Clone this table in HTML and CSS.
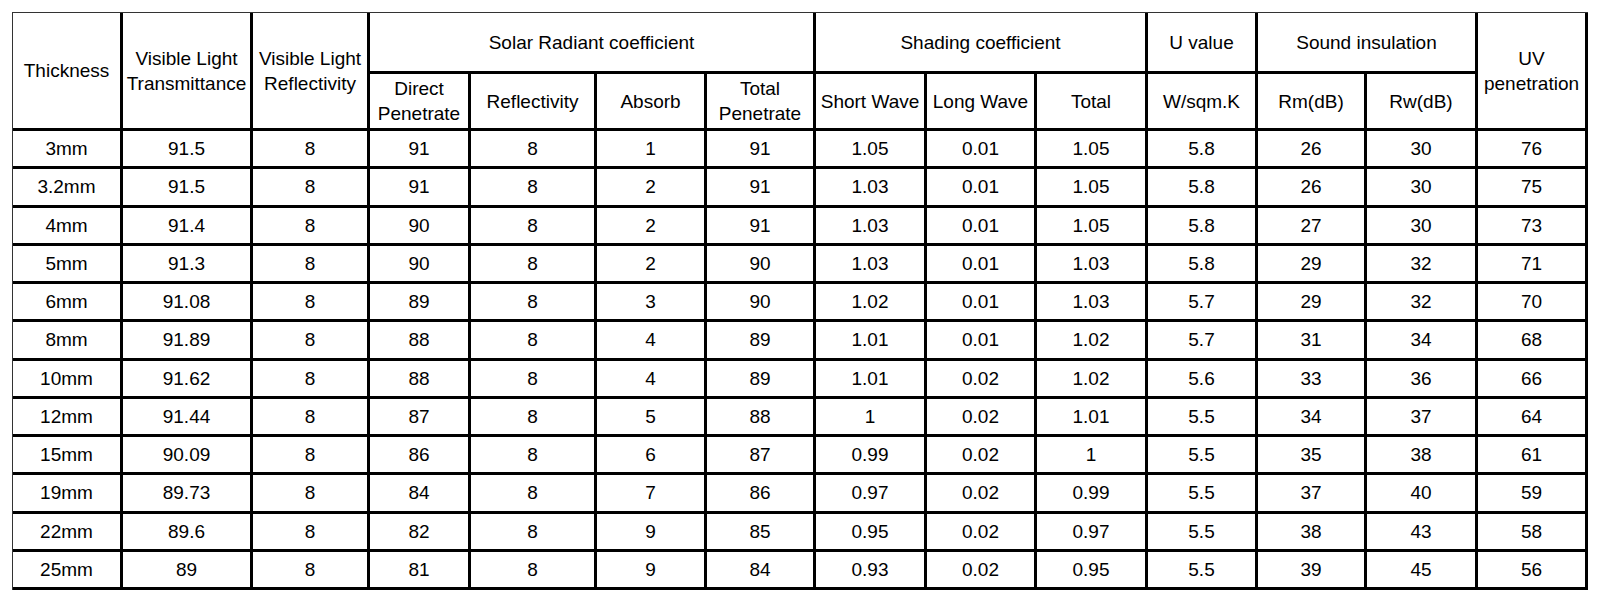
FILE: index.html
```html
<!DOCTYPE html>
<html lang="en">
<head>
<meta charset="utf-8">
<title>Glass performance table</title>
<link rel="stylesheet" href="styles.css">
</head>
<body>
<div class="sheet">
  <div class="cell span-r2">Thickness</div>
  <div class="cell span-r2">Visible Light<br>Transmittance</div>
  <div class="cell span-r2">Visible Light<br>Reflectivity</div>
  <div class="cell span-c4">Solar Radiant coefficient</div>
  <div class="cell span-c3">Shading coefficient</div>
  <div class="cell">U value</div>
  <div class="cell span-c2">Sound insulation</div>
  <div class="cell span-r2">UV<br>penetration</div>

  <div class="cell">Direct<br>Penetrate</div>
  <div class="cell">Reflectivity</div>
  <div class="cell">Absorb</div>
  <div class="cell">Total<br>Penetrate</div>
  <div class="cell">Short Wave</div>
  <div class="cell">Long Wave</div>
  <div class="cell">Total</div>
  <div class="cell">W/sqm.K</div>
  <div class="cell">Rm(dB)</div>
  <div class="cell">Rw(dB)</div>

  <div class="cell">3mm</div><div class="cell">91.5</div><div class="cell">8</div><div class="cell">91</div><div class="cell">8</div><div class="cell">1</div><div class="cell">91</div><div class="cell">1.05</div><div class="cell">0.01</div><div class="cell">1.05</div><div class="cell">5.8</div><div class="cell">26</div><div class="cell">30</div><div class="cell">76</div>
  <div class="cell">3.2mm</div><div class="cell">91.5</div><div class="cell">8</div><div class="cell">91</div><div class="cell">8</div><div class="cell">2</div><div class="cell">91</div><div class="cell">1.03</div><div class="cell">0.01</div><div class="cell">1.05</div><div class="cell">5.8</div><div class="cell">26</div><div class="cell">30</div><div class="cell">75</div>
  <div class="cell">4mm</div><div class="cell">91.4</div><div class="cell">8</div><div class="cell">90</div><div class="cell">8</div><div class="cell">2</div><div class="cell">91</div><div class="cell">1.03</div><div class="cell">0.01</div><div class="cell">1.05</div><div class="cell">5.8</div><div class="cell">27</div><div class="cell">30</div><div class="cell">73</div>
  <div class="cell">5mm</div><div class="cell">91.3</div><div class="cell">8</div><div class="cell">90</div><div class="cell">8</div><div class="cell">2</div><div class="cell">90</div><div class="cell">1.03</div><div class="cell">0.01</div><div class="cell">1.03</div><div class="cell">5.8</div><div class="cell">29</div><div class="cell">32</div><div class="cell">71</div>
  <div class="cell">6mm</div><div class="cell">91.08</div><div class="cell">8</div><div class="cell">89</div><div class="cell">8</div><div class="cell">3</div><div class="cell">90</div><div class="cell">1.02</div><div class="cell">0.01</div><div class="cell">1.03</div><div class="cell">5.7</div><div class="cell">29</div><div class="cell">32</div><div class="cell">70</div>
  <div class="cell">8mm</div><div class="cell">91.89</div><div class="cell">8</div><div class="cell">88</div><div class="cell">8</div><div class="cell">4</div><div class="cell">89</div><div class="cell">1.01</div><div class="cell">0.01</div><div class="cell">1.02</div><div class="cell">5.7</div><div class="cell">31</div><div class="cell">34</div><div class="cell">68</div>
  <div class="cell">10mm</div><div class="cell">91.62</div><div class="cell">8</div><div class="cell">88</div><div class="cell">8</div><div class="cell">4</div><div class="cell">89</div><div class="cell">1.01</div><div class="cell">0.02</div><div class="cell">1.02</div><div class="cell">5.6</div><div class="cell">33</div><div class="cell">36</div><div class="cell">66</div>
  <div class="cell">12mm</div><div class="cell">91.44</div><div class="cell">8</div><div class="cell">87</div><div class="cell">8</div><div class="cell">5</div><div class="cell">88</div><div class="cell">1</div><div class="cell">0.02</div><div class="cell">1.01</div><div class="cell">5.5</div><div class="cell">34</div><div class="cell">37</div><div class="cell">64</div>
  <div class="cell">15mm</div><div class="cell">90.09</div><div class="cell">8</div><div class="cell">86</div><div class="cell">8</div><div class="cell">6</div><div class="cell">87</div><div class="cell">0.99</div><div class="cell">0.02</div><div class="cell">1</div><div class="cell">5.5</div><div class="cell">35</div><div class="cell">38</div><div class="cell">61</div>
  <div class="cell">19mm</div><div class="cell">89.73</div><div class="cell">8</div><div class="cell">84</div><div class="cell">8</div><div class="cell">7</div><div class="cell">86</div><div class="cell">0.97</div><div class="cell">0.02</div><div class="cell">0.99</div><div class="cell">5.5</div><div class="cell">37</div><div class="cell">40</div><div class="cell">59</div>
  <div class="cell">22mm</div><div class="cell">89.6</div><div class="cell">8</div><div class="cell">82</div><div class="cell">8</div><div class="cell">9</div><div class="cell">85</div><div class="cell">0.95</div><div class="cell">0.02</div><div class="cell">0.97</div><div class="cell">5.5</div><div class="cell">38</div><div class="cell">43</div><div class="cell">58</div>
  <div class="cell">25mm</div><div class="cell">89</div><div class="cell">8</div><div class="cell">81</div><div class="cell">8</div><div class="cell">9</div><div class="cell">84</div><div class="cell">0.93</div><div class="cell">0.02</div><div class="cell">0.95</div><div class="cell">5.5</div><div class="cell">39</div><div class="cell">45</div><div class="cell">56</div>
</div>
</body>
</html>
```

FILE: styles.css
```css
html, body {
  margin: 0;
  padding: 0;
  background: #ffffff;
}

body {
  font-family: "Liberation Sans", Arial, sans-serif;
  font-size: 19px;
  line-height: 25px;
  color: #000000;
}

.sheet {
  display: grid;
  grid-template-columns: 110px 130px 117px 101px 126px 110px 109px 111px 110px 111px 110px 109px 111px 110px;
  grid-template-rows: 61px 57px repeat(12, 38.25px);
  width: max-content;
  margin: 12px 0 0 12px;
  border-left: 1px solid #333333;
  border-top: 1px solid #333333;
}

.cell {
  box-sizing: border-box;
  display: flex;
  align-items: center;
  justify-content: center;
  text-align: center;
  border-right: 3px solid #000000;
  border-bottom: 3px solid #000000;
  white-space: nowrap;
  overflow: hidden;
}

.span-r2 {
  grid-row: span 2;
}

.span-c2 {
  grid-column: span 2;
}

.span-c3 {
  grid-column: span 3;
}

.span-c4 {
  grid-column: span 4;
}
```
